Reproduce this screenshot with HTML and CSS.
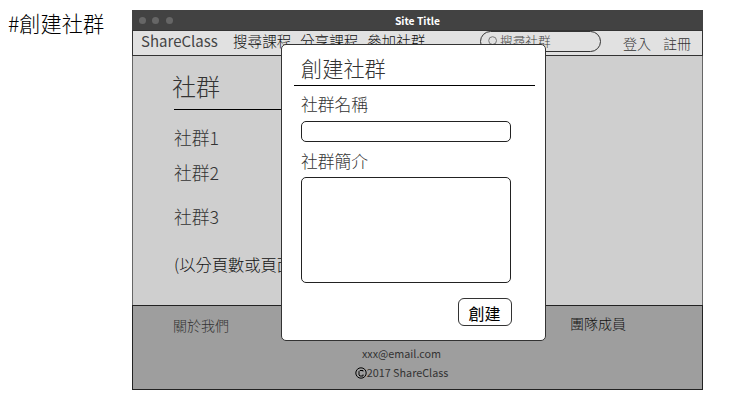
FILE: index.html
```html
<!DOCTYPE html>
<html lang="zh-Hant">
<head>
<meta charset="utf-8">
<title>ShareClass</title>
<link rel="stylesheet" href="styles.css">
</head>
<body>
<h1 class="caption">#創建社群</h1>
<div class="window">
  <header class="titlebar">
    <div class="dots"><i></i><i></i><i></i></div>
    <span>Site Title</span>
  </header>
  <nav class="nav">
    <span class="brand">ShareClass</span>
    <span class="link">搜尋課程</span>
    <span class="link">分享課程</span>
    <span class="link">參加社群</span>
    <div class="search">
      <svg width="9" height="12" viewBox="0 0 9 12"><circle cx="4.6" cy="4.6" r="3.9"/><path d="M6.8 7.6 8.6 10.4"/></svg>
      <span>搜尋社群</span>
    </div>
    <div class="account"><span>登入</span><span>註冊</span></div>
  </nav>
  <main class="content">
    <h2>社群</h2>
    <ul>
      <li>社群1</li>
      <li>社群2</li>
      <li>社群3</li>
    </ul>
    <p>(以分頁數或頁面</p>
  </main>
  <footer class="footer">
    <span class="about">關於我們</span>
    <div class="contact"><span>xxx@email.com</span><span class="copy"><svg width="12" height="12" viewBox="0 0 12 12"><circle cx="6" cy="6" r="5.2"/><path d="M8 4.5V3.5H5L4 4.5V8L5 9H8V7.5"/></svg>2017 ShareClass</span></div>
    <span class="team">團隊成員</span>
  </footer>
  <section class="modal">
    <h3>創建社群</h3>
    <label>社群名稱</label>
    <div class="field"></div>
    <label class="second">社群簡介</label>
    <div class="field area"></div>
    <button>創建</button>
  </section>
</div>
</body>
</html>
```
FILE: styles.css
```css
* { box-sizing: border-box; }
body {
  margin: 0;
  width: 739px;
  height: 410px;
  overflow: hidden;
  display: flex;
  background: #fff;
  color: #333;
  font-family: "Noto Sans CJK TC", "Noto Sans", sans-serif;
  font-weight: 300;
  white-space: nowrap;
}
h1, h2, h3, ul, p { margin: 0; padding: 0; font-weight: 300; list-style: none; }
svg { fill: none; stroke: currentColor; }
.caption {
  width: 132px;
  padding: 8px 0 0 8px;
  font-size: 21.2px;
  line-height: 30px;
  color: #000;
}
.window {
  position: relative;
  width: 571px;
  height: 380px;
  margin-top: 10px;
  display: flex;
  flex-direction: column;
}
.titlebar {
  position: relative;
  height: 20px;
  background: #424242;
  color: #fff;
  font-size: 10.3px;
  font-weight: 700;
  line-height: 21px;
  text-align: center;
}
.dots { position: absolute; left: 7px; top: 7px; display: flex; gap: 6.3px; }
.dots i { width: 7px; height: 7px; border-radius: 50%; background: #666; }
.nav {
  height: 26px;
  display: flex;
  background: #e1e1e1;
  border: 1px solid #333;
  padding-left: 8px;
  line-height: 19px;
}
.brand { width: 92px; font-size: 15px; font-weight: 400; color: #444; }
.link { width: 67px; font-size: 14.6px; color: #111; }
.search {
  width: 121px;
  height: 21px;
  margin: 0 0 0 46px;
  padding-left: 7px;
  display: flex;
  gap: 3px;
  border: 1px solid #333;
  border-radius: 11px;
  font-size: 12.7px;
  line-height: 17px;
  color: #444;
}
.search svg { margin-top: 4px; stroke: #777; }
.account {
  display: flex;
  gap: 12px;
  margin-left: 22px;
  font-size: 14px;
  line-height: 24px;
}
.content {
  height: 249px;
  padding: 11px 0 0 40px;
  background: #cfcfcf;
  border: solid #666;
  border-width: 0 1px;
}
.content h2 {
  height: 43px;
  width: 140px;
  margin-left: 1px;
  border-bottom: 1px solid #000;
  font-size: 24px;
  line-height: 38px;
  text-indent: -2px;
}
.content li { height: 35px; font-size: 17.8px; line-height: 28px; padding-left: 1px; }
.content ul { padding-top: 13px; }
.content li:nth-child(2) { height: 44px; }
.content li:nth-child(3) { height: 48px; }
.content p { padding-left: 1px; font-size: 16.3px; line-height: 28px; color: #111; }
.footer {
  height: 85px;
  display: grid;
  grid-template-columns: 156px 227px 1fr;
  padding-left: 40px;
  background: #9e9e9e;
  border: 1px solid #222;
  font-size: 14px;
  line-height: 20px;
}
.about { padding-top: 9px; }
.team { padding-top: 7px; padding-left: 14px; color: #111; }
.contact {
  display: flex;
  flex-direction: column;
  align-items: center;
  padding-top: 38px;
  font-size: 10.8px;
  font-weight: 400;
  line-height: 19px;
  padding-right: 82px;
}
.copy { display: flex; align-items: center; }
.copy svg { stroke: #000; }
.modal {
  position: absolute;
  left: 149px;
  top: 34px;
  width: 265px;
  height: 297px;
  padding: 7px 10px 0 12px;
  display: flex;
  flex-direction: column;
  background: #fff;
  border: 1px solid #333;
  border-radius: 5px;
}
.modal h3 {
  height: 34px;
  padding-left: 7px;
  border-bottom: 1px solid #000;
  font-size: 21.2px;
  line-height: 31px;
}
.modal label { height: 35px; padding: 6px 0 0 7px; font-size: 16.8px; line-height: 24px; }
.modal .second { padding-top: 7px; }
.field {
  width: 210px;
  height: 21px;
  margin-left: 7px;
  border: 1px solid #222;
  border-radius: 5px;
}
.area { height: 106px; }
.modal button {
  width: 54px;
  height: 28px;
  margin: 15px 0 0 164px;
  padding: 0 1px 0 0;
  border: 1px solid #333;
  border-radius: 6px;
  background: #fff;
  color: #000;
  font: 400 16px/28px "Noto Sans CJK TC", sans-serif;
}
```
